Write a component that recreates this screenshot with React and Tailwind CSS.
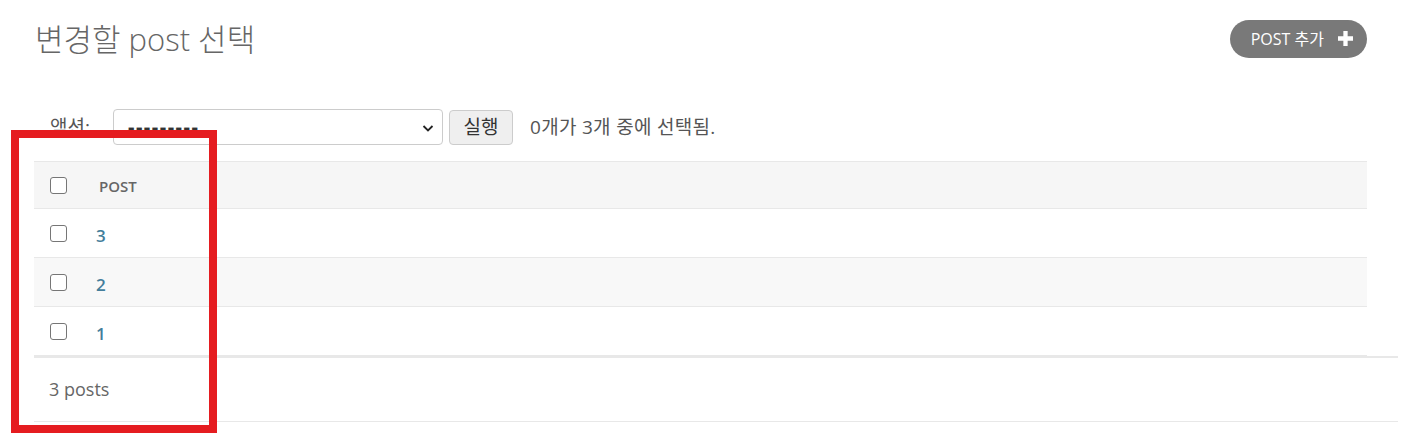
import { useState } from "react";

const font = {
  fontFamily: '"Open Sans", "Noto Sans CJK KR", sans-serif',
};

function Checkbox() {
  return (
    <span className="block w-[17px] h-[17px] rounded-[3px] border border-[#767676] bg-white"></span>
  );
}

function App() {
  const [rows] = useState(["3", "2", "1"]);

  return (
    <div className="relative w-[1405px] h-[436px] bg-white overflow-hidden text-[#333]" style={font}>
      <div className="pl-[34px] pr-[7px]">
        <div className="flex items-center justify-between h-[78px] mr-[31px]">
          <h1 className="text-[31px] font-light text-[#666] leading-none pl-[1px]">변경할 post 선택</h1>
          <button className="flex items-center gap-[14px] h-[38px] pl-[21px] pr-[14px] rounded-full bg-[#797979] text-white text-[16px] -mt-[1px]">
            POST 추가
            <svg width="15" height="15" viewBox="0 0 14 14">
              <path d="M5 0h4v5h5v4H9v5H5V9H0V5h5z" fill="#fff" />
            </svg>
          </button>
        </div>

        <div className="flex items-center h-[36px] mt-[31px] mb-[16px] pl-[16px] text-[19px]">
          <span className="text-[#555] w-[63px]">액션:</span>
          <div className="relative w-[330px] h-[36px] rounded-[4px] border border-[#ccc] flex items-center pl-[14px]">
            <span className="text-[20px] font-bold tracking-[1.5px] text-[#333]">---------</span>
            <svg className="absolute right-[8px] top-[12px]" width="12" height="12" viewBox="0 0 12 12">
              <path d="M1.5 4l4.5 4.5L10.5 4" stroke="#222" strokeWidth="1.8" fill="none" />
            </svg>
          </div>
          <button className="ml-[6px] h-[35px] w-[64px] rounded-[4px] border border-[#ccc] bg-[#efefef] text-[19px] text-[#333]">실행</button>
          <span className="ml-[17px] text-[#555] tracking-[0.3px]">0개가 3개 중에 선택됨.</span>
        </div>

        <div className="mr-[31px]">
          <div className="flex items-center h-[48px] bg-[#f6f6f6] border-t border-b border-[#e8e8e8] pl-[16px]">
            <Checkbox />
            <span className="ml-[32px] text-[15px] font-semibold text-[#666] mt-[3px]">POST</span>
          </div>
          {rows.map((r, i) => (
            <div
              key={r}
              className={`flex items-center h-[49px] border-b border-[#e8e8e8] pl-[16px] ${
                i === 1 ? "bg-[#f8f8f8]" : "bg-white"
              }`}
            >
              <Checkbox />
              <a className="ml-[29px] text-[17px] font-semibold text-[#447e9b] mt-[6px]">{r}</a>
            </div>
          ))}
        </div>
        <div className="border-t-2 border-b border-[#e8e8e8] h-[66px] flex items-center pl-[15px] text-[18px] text-[#666]">
          3 posts
        </div>
      </div>

      <div className="absolute left-[11px] top-[130px] w-[206px] h-[303px] border-[8px] border-[#e51c20]"></div>
    </div>
  );
}

export default App;
